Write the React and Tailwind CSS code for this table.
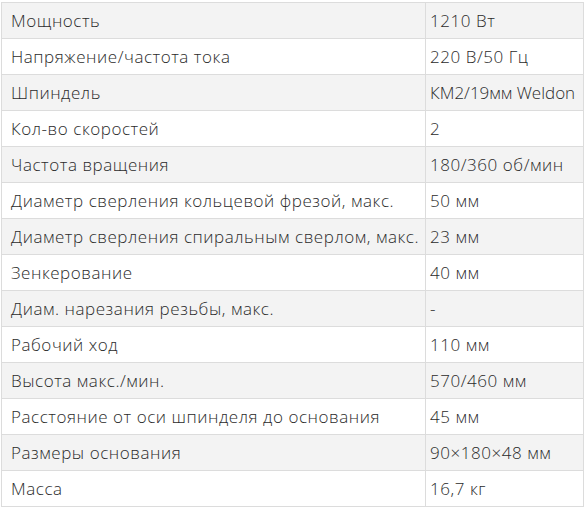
import React from 'react';

const rows = [
    ['Мощность', '1210 Вт'],
    ['Напряжение/частота тока', '220 В/50 Гц'],
    ['Шпиндель', 'КМ2/19мм Weldon'],
    ['Кол-во скоростей', '2'],
    ['Частота вращения', '180/360 об/мин'],
    ['Диаметр сверления кольцевой фрезой, макс.', '50 мм'],
    ['Диаметр сверления спиральным сверлом, макс.', '23 мм'],
    ['Зенкерование', '40 мм'],
    ['Диам. нарезания резьбы, макс.', '-'],
    ['Рабочий ход', '110 мм'],
    ['Высота макс./мин.', '570/460 мм'],
    ['Расстояние от оси шпинделя до основания', '45 мм'],
    ['Размеры основания', '90×180×48 мм'],
    ['Масса', '16,7 кг'],
];

export default function App() {
    return (
        <div className="bg-white pt-[2px] pl-[1px] w-[585px] h-[511px]" style={{ fontFamily: '"Open Sans", "Liberation Sans", sans-serif' }}>
            <table className="w-[583px] border-collapse text-[17px] font-light text-[#2b2b2b] tracking-[0.55px]">
                <tbody>
                    {rows.map(([k, v], i) => (
                        <tr key={i} className={i % 2 === 0 ? 'bg-[#f3f3f3]' : 'bg-white'}>
                            <td className="border border-[#dcdcdc] h-[36px] pl-[9px] w-[424px] leading-none whitespace-nowrap">{k}</td>
                            <td className={`border border-[#dcdcdc] h-[36px] pl-[4px] leading-none whitespace-nowrap ${v.includes('Weldon') ? 'tracking-normal' : ''}`}>{v}</td>
                        </tr>
                    ))}
                </tbody>
            </table>
        </div>
    );
}
